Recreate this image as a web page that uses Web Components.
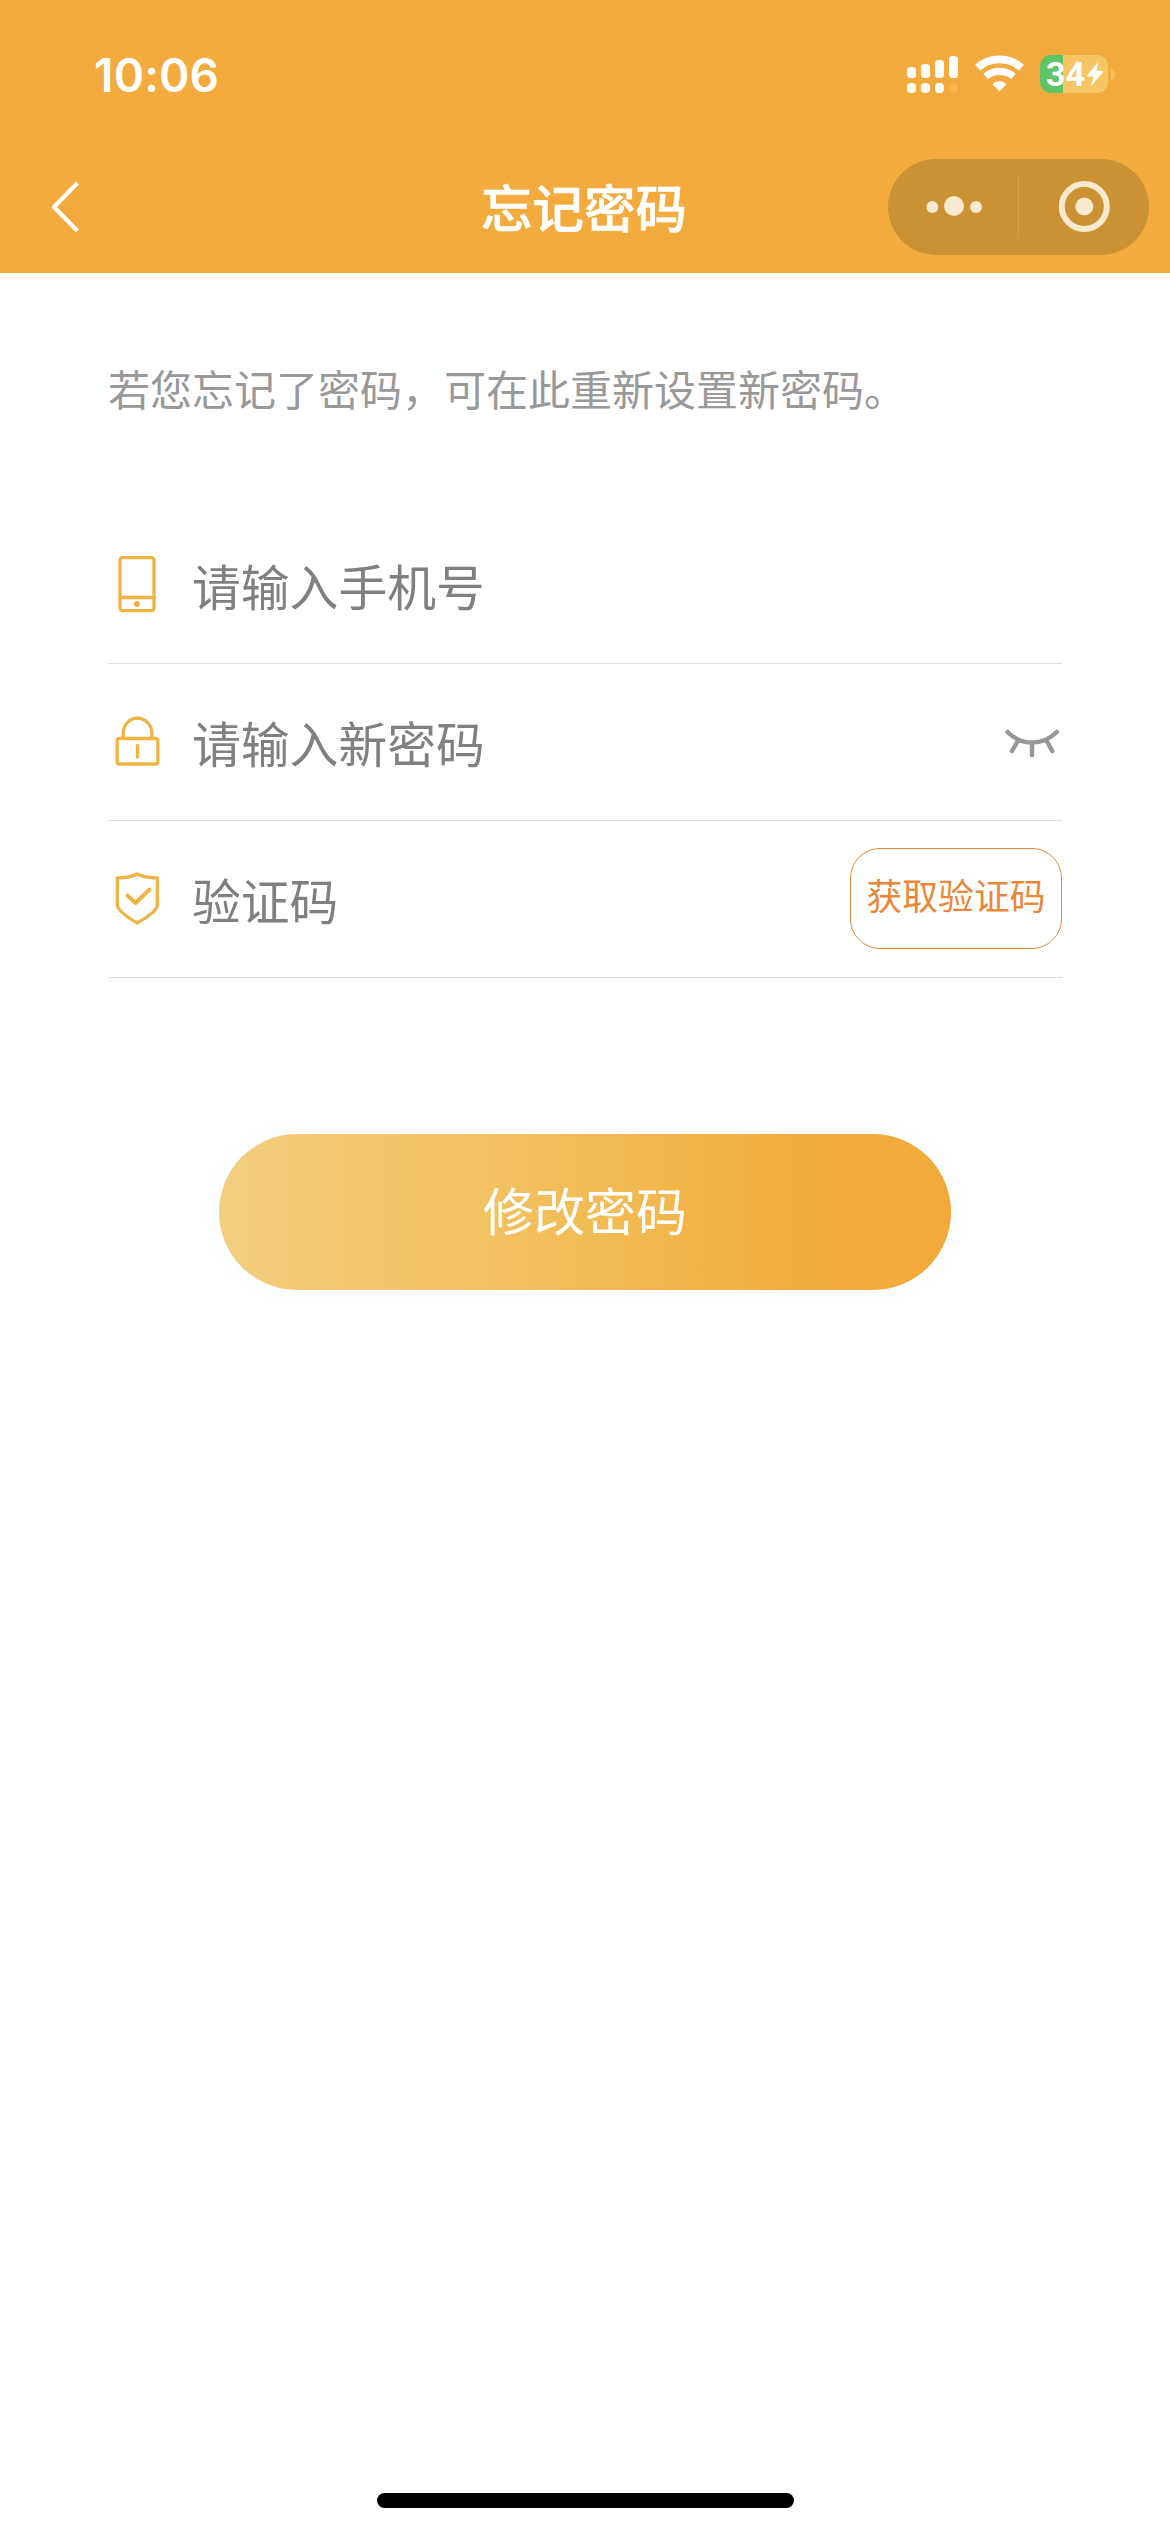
<!DOCTYPE html>
<html lang="zh-CN">
<head>
<meta charset="UTF-8">
<title>忘记密码</title>
<style>
    body {
        margin: 0;
        background: #fff;
        font-family: 'Noto Sans CJK SC', 'Noto Sans', sans-serif;
    }
</style>
</head>
<body>
<forgot-page></forgot-page>

<script>
class StatusBar extends HTMLElement {
    constructor() {
        super();
        this.attachShadow({mode: 'open'});
    }

    connectedCallback() {
        this.shadowRoot.innerHTML = `
            <style>
                :host {
                    display: flex;
                    justify-content: space-between;
                    align-items: flex-start;
                    box-sizing: border-box;
                    height: 141px;
                    padding: 50px 55px 0 94px;
                    color: #fff;
                    font-family: Inter, sans-serif;
                }
                .time { font-size: 46px; font-weight: 600; line-height: 50px; letter-spacing: 0.2px; }
                .icons { display: flex; align-items: flex-start; padding-top: 5px; }
                svg { display: block; flex: none; }
                .signal { margin-right: 17px; }
                .wifi { margin-right: 16px; }
                .battery {
                    display: flex;
                    align-items: center;
                    box-sizing: border-box;
                    width: 68px;
                    height: 38px;
                    padding-left: 6px;
                    border-radius: 11px;
                    background: linear-gradient(90deg, #60c466 23px, #f6c665 23px);
                }
                .battery span { width: 40px; font: 700 34px/38px Roboto, sans-serif; }
                .nub { margin: 13px 0 0 3px; }
            </style>
            <div class="time">${this.getAttribute('time')}</div>
            <div class="icons">
                <svg class="signal" width="51" height="38" viewBox="0 0 51 38" fill="#fff">
                    <rect x="0" y="12" width="9" height="11" rx="3.5"/>
                    <rect x="14" y="9" width="9" height="14" rx="3.5"/>
                    <rect x="28" y="5" width="9" height="18" rx="3.5"/>
                    <rect x="42" y="1" width="9" height="22" rx="3.5"/>
                    <rect x="0" y="28" width="9" height="10" rx="4"/>
                    <rect x="14" y="28" width="9" height="10" rx="4"/>
                    <rect x="28" y="28" width="9" height="10" rx="4"/>
                    <rect x="42" y="28" width="9" height="10" rx="4" fill="#f7b64f"/>
                </svg>
                <svg class="wifi" width="49" height="38" viewBox="0 -0.7 49 38" fill="none" stroke="#fff">
                    <path d="M2.6 11.9A33.4 33.4 0 0 1 46.4 11.9" stroke-width="7.6"/>
                    <path d="M10.6 20.7A21.7 21.7 0 0 1 38.4 20.7" stroke-width="7.2"/>
                    <path d="M18.6 28.6Q24.5 23.6 30.4 28.6L24.5 34.6Z" fill="#fff" stroke-width="1.6" stroke-linejoin="round"/>
                </svg>
                <div class="battery">
                    <span>34</span>
                    <svg width="18" height="26" viewBox="0 0 18 26" fill="#fff"><path d="M12.5 0.5L1 14.6Q0.6 15.6 1.8 15.6H7.4L5 25.2L17 10.9Q17.4 9.8 16.2 9.8H10.4Z"/></svg>
                </div>
                <svg class="nub" width="4" height="12" viewBox="0 0 4 12"><path d="M0 0Q4 2 4 6T0 12Z" fill="#f6c05d"/></svg>
            </div>
        `;
    }
}

class NavBar extends HTMLElement {
    constructor() {
        super();
        this.attachShadow({mode: 'open'});
    }

    connectedCallback() {
        this.shadowRoot.innerHTML = `
            <style>
                :host {
                    display: grid;
                    grid-template-columns: 433px auto 1fr;
                    align-items: center;
                    box-sizing: border-box;
                    height: 132px;
                    padding: 0 21px 0 48px;
                    color: #fff;
                }
                svg { display: block; }
                h1 {
                    margin: 0 0 3px;
                    font-size: 51.5px;
                    font-weight: 500;
                    line-height: 72px;
                    -webkit-text-stroke: 0.6px #fff;
                }
                .capsule {
                    display: flex;
                    align-items: center;
                    justify-self: end;
                    width: 261px;
                    height: 96px;
                    border-radius: 48px;
                    background: #ca9232;
                }
                .line { width: 1px; height: 62px; background: #d3a04a; }
                .capsule svg { flex: 1; }
            </style>
            <svg width="32" height="56" viewBox="0 0 32 56" fill="none" stroke="#fff" stroke-width="4.2" stroke-linejoin="round">
                <path d="M29.5 4L6 28L29.5 52"/>
            </svg>
            <h1><slot></slot></h1>
            <div class="capsule">
                <svg width="130" height="96" viewBox="0 0 130 96" fill="#f9e9cf">
                    <circle cx="44.3" cy="48" r="6"/>
                    <circle cx="66" cy="47" r="10"/>
                    <circle cx="88" cy="48" r="6"/>
                </svg>
                <div class="line"></div>
                <svg width="130" height="96" viewBox="0 0 130 96">
                    <circle cx="65.3" cy="47.5" r="22.5" fill="none" stroke="#f9e9cf" stroke-width="6"/>
                    <circle cx="65.3" cy="47.5" r="9" fill="#f9e9cf"/>
                </svg>
            </div>
        `;
    }
}

const ICONS = {
    phone: `
        <rect x="12" y="1.6" width="34" height="53" rx="2.6"/>
        <path d="M12 41.5H46"/>
        <circle cx="29" cy="48" r="3" fill="#f0b445" stroke="none"/>`,
    lock: `
        <rect x="9.2" y="25.5" width="40.6" height="25.5" rx="2"/>
        <path d="M15.2 25V20A14.3 14.8 0 0 1 43.8 20V25M29.5 32.5V44"/>`,
    shield: `
        <path d="M29.3 4Q22 7.8 9.3 8V35Q9.5 38 14 42.4Q20 48 29.3 53Q38.6 48 44.8 42.4Q49.3 38 49.3 35V8Q36.6 7.8 29.3 4Z"/>
        <path d="M19.5 25.5L27.6 33L41.5 19.5" stroke-width="4"/>`
};

class FormRow extends HTMLElement {
    constructor() {
        super();
        this.attachShadow({mode: 'open'});
    }

    connectedCallback() {
        this.shadowRoot.innerHTML = `
            <style>
                :host {
                    display: flex;
                    align-items: center;
                    height: 156px;
                    border-bottom: 1px solid #dfdfdf;
                    color: #808080;
                    font-size: 48.8px;
                    line-height: 70px;
                }
                svg { flex: none; margin-right: 26px; }
                .label { flex: 1; }
            </style>
            <svg width="58" height="58" viewBox="0 0 58 58" fill="none" stroke="#f0b445" stroke-width="3.3" stroke-linecap="round" stroke-linejoin="round">${ICONS[this.getAttribute('icon')]}</svg>
            <span class="label">${this.getAttribute('placeholder')}</span>
            <slot></slot>
        `;
    }
}

class EyeToggle extends HTMLElement {
    constructor() {
        super();
        this.attachShadow({mode: 'open'});
        this.shadowRoot.innerHTML = `
            <style>
                :host { display: block; }
                svg { display: block; }
            </style>
            <svg width="58" height="58" viewBox="0 0 58 58" fill="none" stroke="#979797" stroke-width="4.5" stroke-linecap="round">
                <path d="M3.5 19Q14 29.6 28 29.6T52.8 19M13.7 28L8 38M28 30V42M42.7 28L48.2 38"/>
            </svg>
        `;
    }
}

class CodeButton extends HTMLElement {
    constructor() {
        super();
        this.attachShadow({mode: 'open'});
        this.shadowRoot.innerHTML = `
            <style>
                :host {
                    display: flex;
                    align-items: center;
                    justify-content: center;
                    box-sizing: border-box;
                    width: 212px;
                    height: 101px;
                    margin-bottom: 1px;
                    padding-bottom: 9px;
                    border: 1px solid #e18a3c;
                    border-radius: 30px;
                    color: #e8873a;
                    font-size: 35.8px;
                    line-height: 50px;
                    white-space: nowrap;
                }
            </style>
            <slot></slot>
        `;
    }
}

class SubmitButton extends HTMLElement {
    constructor() {
        super();
        this.attachShadow({mode: 'open'});
        this.shadowRoot.innerHTML = `
            <style>
                :host {
                    display: flex;
                    align-items: center;
                    justify-content: center;
                    box-sizing: border-box;
                    width: 732px;
                    height: 156px;
                    padding-bottom: 6px;
                    border-radius: 78px;
                    background: linear-gradient(90deg, #f3cf80, #f2bc55 50%, #f2b041 75%, #f2a93a);
                    box-shadow: 0 0 26px rgba(90, 130, 130, 0.05);
                    color: #fff;
                    font-size: 51px;
                    line-height: 72px;
                }
            </style>
            <slot></slot>
        `;
    }
}

class ForgotPage extends HTMLElement {
    constructor() {
        super();
        this.attachShadow({mode: 'open'});
        this.shadowRoot.innerHTML = `
            <style>
                :host {
                    display: flex;
                    flex-direction: column;
                    box-sizing: border-box;
                    width: 1170px;
                    height: 2532px;
                    padding-bottom: 24px;
                }
                header { background: #f3ab3e; }
                main { flex: 1; padding: 85px 108px 0; }
                p {
                    margin: 0 0 89px;
                    color: #999;
                    font-size: 42px;
                    line-height: 60px;
                    white-space: nowrap;
                }
                submit-button { margin: 156px auto 0; }
                .home { width: 417px; height: 15px; margin: 0 auto; border-radius: 8px; background: #000; }
            </style>
            <header>
                <status-bar time="10:06"></status-bar>
                <nav-bar>忘记密码</nav-bar>
            </header>
            <main>
                <p>若您忘记了密码，可在此重新设置新密码。</p>
                <form-row icon="phone" placeholder="请输入手机号"></form-row>
                <form-row icon="lock" placeholder="请输入新密码"><eye-toggle></eye-toggle></form-row>
                <form-row icon="shield" placeholder="验证码"><code-button>获取验证码</code-button></form-row>
                <submit-button>修改密码</submit-button>
            </main>
            <div class="home"></div>
        `;
    }
}

customElements.define('status-bar', StatusBar);
customElements.define('nav-bar', NavBar);
customElements.define('form-row', FormRow);
customElements.define('eye-toggle', EyeToggle);
customElements.define('code-button', CodeButton);
customElements.define('submit-button', SubmitButton);
customElements.define('forgot-page', ForgotPage);
</script>
</body>
</html>
